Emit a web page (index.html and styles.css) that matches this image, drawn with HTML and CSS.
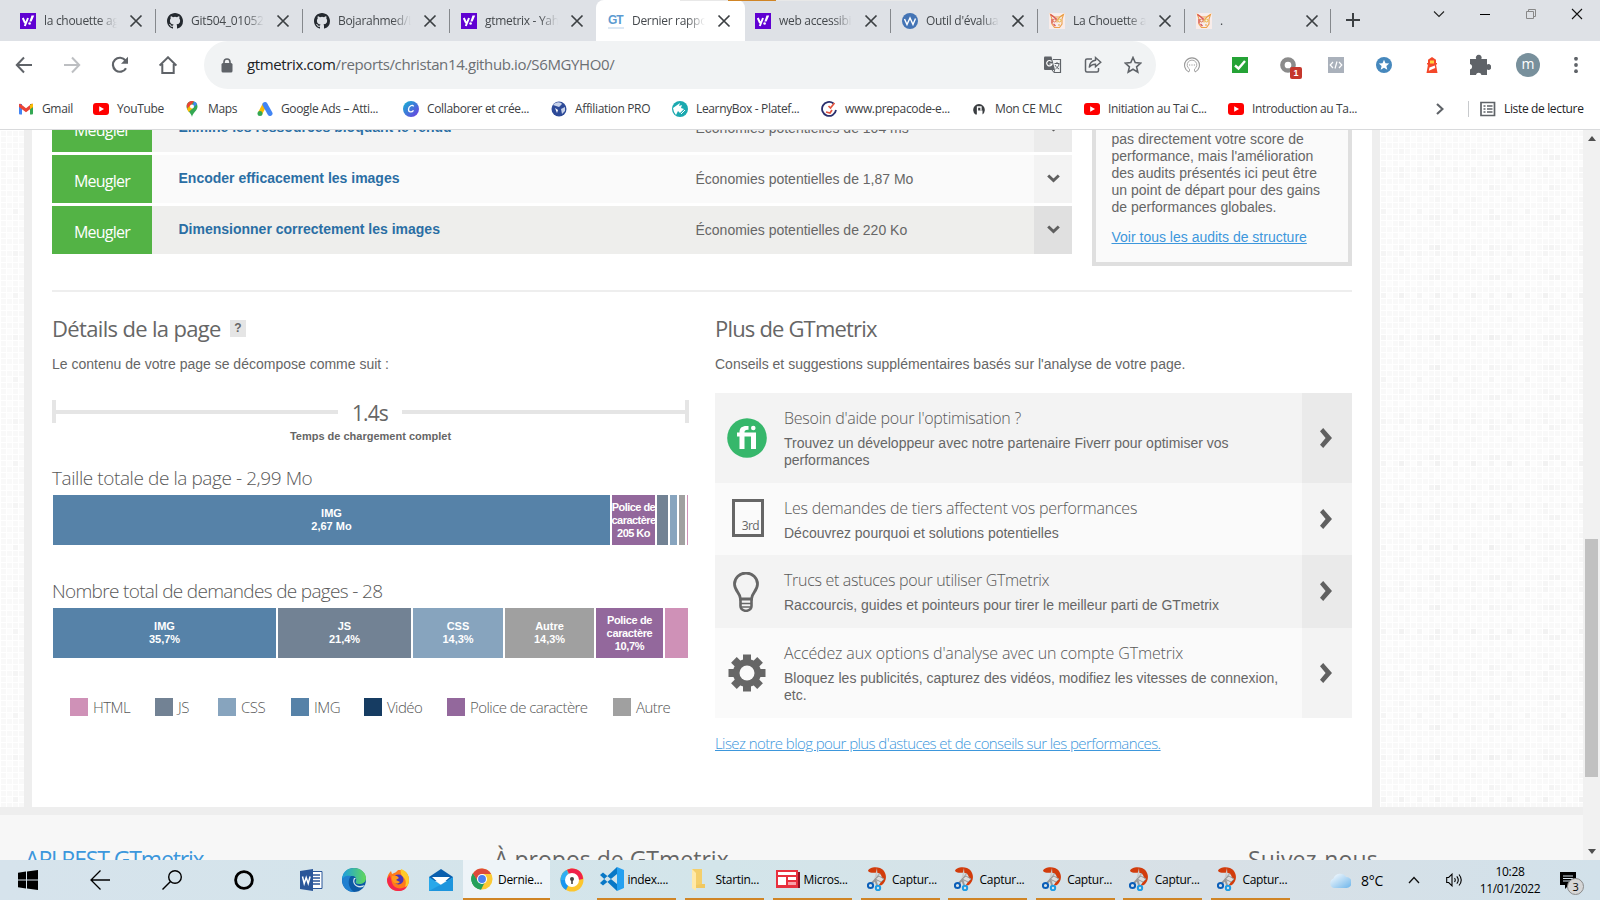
FILE: index.html
```html
<!DOCTYPE html>
<html lang="fr">
<head>
<meta charset="utf-8">
<title>Dernier rapport de performances | GTmetrix</title>
<link rel="stylesheet" href="styles.css">
</head>
<body>
<svg class="defs" width="0" height="0">
  <symbol id="close" viewBox="0 0 14 14"><path d="M1.500 1.500l11 11M12.500 1.500l-11 11" stroke="#3c4043" stroke-width="1.700" fill="none"/></symbol>
  <symbol id="yahoo" viewBox="0 0 16 16"><path fill="#6001d2" d="M0 0h16v16H0z"/><path d="M2.800 5l2.300 5M8 5l-3.200 8" stroke="#fff" stroke-width="2" fill="none"/><path d="M11.500 2.500h2.700L11.600 8.600H9.400z" fill="#fff"/><circle cx="9.600" cy="10.500" r="1.300" fill="#fff"/></symbol>
  <symbol id="github" viewBox="0 0 16 16"><path fill="#24292f" d="M8 0C3.580 0 0 3.580 0 8c0 3.540 2.290 6.530 5.470 7.590.4.070.55-.17.55-.38 0-.19-.01-.82-.01-1.490-2.010.37-2.530-.49-2.690-.94-.09-.23-.48-.94-.82-1.130-.28-.15-.68-.52-.01-.53.63-.01 1.080.58 1.230.82.72 1.210 1.870.87 2.330.66.07-.52.28-.87.51-1.070-1.780-.2-3.640-.89-3.640-3.950 0-.87.31-1.590.82-2.150-.08-.2-.36-1.020.08-2.120 0 0 .67-.21 2.200.82a7.600 7.600 0 0 1 4 0c1.530-1.040 2.200-.82 2.200-.82.44 1.100.16 1.920.08 2.120.51.56.82 1.270.82 2.150 0 3.070-1.870 3.750-3.650 3.950.29.25.54.73.54 1.480 0 1.070-.01 1.930-.01 2.200 0 .21.15.46.55.38A8.010 8.010 0 0 0 16 8c0-4.420-3.580-8-8-8z"/></symbol>
  <symbol id="owl" viewBox="0 0 16 16"><path fill="#f8ecea" d="M0 0h16v16H0z"/><path d="M1.500 1.500l4 2.500h5l4-2.500-1.500 4.500v5L10.500 14.500h-5L3 11V6z" fill="none" stroke="#eda04c" stroke-width="1.100"/><path d="M1.500 1.500L8 6.500M3 6v4.500M4.500 11l2 2" fill="none" stroke="#d8505a" stroke-width="1.200"/><path d="M14.500 1.500L8 6.500v3M9 12h2" fill="none" stroke="#e8a03a"/><circle cx="5.500" cy="7.500" r="1.500" fill="none" stroke="#dd6a4a"/><circle cx="10.500" cy="7.500" r="1.500" fill="none" stroke="#e8b53a"/></symbol>
  <symbol id="yt" viewBox="0 0 16 16"><rect y="2" width="16" height="12" rx="3" fill="#f00"/><path d="M6.200 5.300v5.400L11 8z" fill="#fff"/></symbol>
  <symbol id="arrow" viewBox="0 0 12 20"><path d="M0 3.200L3.200 0 12 10l-8.800 10L0 16.800 5.600 10z" fill="#606060"/></symbol>
  <symbol id="down" viewBox="0 0 13 9"><path d="M1.200 1.500l5.300 5 5.300-5" fill="none" stroke="#5f5f5f" stroke-width="3"/></symbol>
  <symbol id="snip" viewBox="0 0 20 24"><path d="M1 4C2 0 9-.5 13 1c7 3 8 12 2 17l-4 1c5-5 5-12 0-13C8 5 4 7 1 4z" fill="#d23c0c"/><path d="M10 1L7 13l4 2z" fill="#ccc"/><path d="M13 6l-6 8M8 12l6 3 3-3-5-3z" stroke="#999" fill="#ddd"/><path d="M5 16l4-4M10 18L8 12" stroke="#9a9a9a" stroke-width="2"/><circle cx="3.500" cy="18.500" r="2.600" fill="none" stroke="#0a5eb8" stroke-width="2"/><circle cx="11" cy="21" r="2.200" fill="none" stroke="#1e9be3" stroke-width="2"/></symbol>
</svg>

<header class="browser">
  <div class="tabs">
    <div class="tab"><svg class="fav"><use href="#yahoo"/></svg><span class="tab-title">la chouette agence</span><svg class="x"><use href="#close"/></svg></div>
    <div class="tab"><svg class="fav"><use href="#github"/></svg><span class="tab-title">Git504_01052021</span><svg class="x"><use href="#close"/></svg></div>
    <div class="tab"><svg class="fav"><use href="#github"/></svg><span class="tab-title">Bojarahmed/LaChouette</span><svg class="x"><use href="#close"/></svg></div>
    <div class="tab flat"><svg class="fav"><use href="#yahoo"/></svg><span class="tab-title">gtmetrix - Yahoo</span><svg class="x"><use href="#close"/></svg></div>
    <div class="tab active"><span class="gt">GT</span><span class="tab-title">Dernier rapport</span><svg class="x"><use href="#close"/></svg></div>
    <div class="tab"><svg class="fav"><use href="#yahoo"/></svg><span class="tab-title">web accessibility</span><svg class="x"><use href="#close"/></svg></div>
    <div class="tab"><svg class="fav" viewBox="0 0 16 16"><circle cx="8" cy="8" r="8" fill="#4474b5"/><path d="M2.500 6l2.500 5.500L8 5l3 6.500 2.500-6" fill="none" stroke="#fff" stroke-width="1.400"/></svg><span class="tab-title">Outil d'évaluation</span><svg class="x"><use href="#close"/></svg></div>
    <div class="tab"><svg class="fav"><use href="#owl"/></svg><span class="tab-title">La Chouette agence</span><svg class="x"><use href="#close"/></svg></div>
    <div class="tab last"><svg class="fav"><use href="#owl"/></svg><span class="tab-title">.</span><svg class="x"><use href="#close"/></svg></div>
    <svg class="plus" viewBox="0 0 14 14"><path d="M7 0v14M0 7h14" stroke="#3c4043" stroke-width="2"/></svg>
    <div class="winctl">
      <svg width="12" height="12" viewBox="0 0 12 12"><path d="M1 3.500l5 5 5-5" fill="none" stroke="#222" stroke-width="1.100"/></svg>
      <svg width="12" height="12" viewBox="0 0 12 12"><path d="M1 6.500h10" stroke="#000"/></svg>
      <svg width="12" height="12" viewBox="0 0 12 12"><path d="M1.500 3.500h7v7h-7zM3.500 3.500v-2h7v7h-2" fill="none" stroke="#888"/></svg>
      <svg width="12" height="12" viewBox="0 0 12 12"><path d="M1 1l10 10M11 1L1 11" stroke="#111" stroke-width="1.100"/></svg>
    </div>
    <div class="peek"></div>
  </div>

  <div class="toolbar">
    <div class="nav">
      <svg viewBox="0 0 18 18"><path d="M17 9H2M9 1.500L1.800 9 9 16.500" fill="none" stroke="#5f6368" stroke-width="2"/></svg>
      <svg viewBox="0 0 18 18"><path d="M1 9h15M9 1.500L16.200 9 9 16.500" fill="none" stroke="#bdbfc2" stroke-width="2"/></svg>
      <svg viewBox="0 0 18 18"><path d="M15 12.200A7 7 0 1 1 14.500 4.500" fill="none" stroke="#5f6368" stroke-width="2.200"/><path d="M17 .8v7h-7z" fill="#5f6368"/></svg>
      <svg viewBox="0 0 18 18"><path d="M.6 9.500L9 1.300l8.400 8.200M3.300 8v9h11.400V8" fill="none" stroke="#5f6368" stroke-width="2"/></svg>
    </div>
    <div class="omnibox">
      <svg class="lock" viewBox="0 0 12 15"><rect x=".5" y="5" width="11" height="9.500" rx="1.500" fill="#5f6368"/><path d="M3 6V4a3 3 0 0 1 6 0v2" fill="none" stroke="#5f6368" stroke-width="1.600"/></svg>
      <span class="url"><b>gtmetrix.com</b>/reports/christan14.github.io/S6MGYHO0/</span>
      <div class="omni-icons">
        <svg width="18" height="18" viewBox="0 0 18 18"><path d="M9 3.500h7.500v13H10" fill="none" stroke="#5f6368" stroke-width="1.200"/><path d="M0 1.500Q0 .5 1 .5h6.500L11 14H1Q0 14 0 13z" fill="#5f6368"/><path d="M7.500 5.500A2.700 2.700 0 1 0 8 8H5.500" fill="none" stroke="#fff" stroke-width="1.200"/><path d="M10.500 7.500h5M13 6v1.500M15 8c-.5 2.500-2 4-3.500 5M11 9c1 2 2.500 3 4 4M8 14l2 2.500.5-2.500" fill="none" stroke="#5f6368"/></svg>
        <svg width="18" height="18" viewBox="0 0 18 18"><path d="M8 3H3Q1.500 3 1.500 4.500v10Q1.500 16 3 16h10q1.500 0 1.500-1.500V12" fill="none" stroke="#5f6368" stroke-width="1.500"/><path d="M11.500 1.500l5.300 4.700-5.300 4.600V8.200c-3 0-5 1-6.300 3.300.3-4 2.500-6.700 6.300-7.200z" fill="none" stroke="#5f6368" stroke-width="1.400"/></svg>
        <svg width="18" height="18" viewBox="0 0 18 18"><path d="M9 1.500l2.200 5.100 5.600.5-4.200 3.700 1.200 5.400L9 13.300l-4.800 2.900 1.200-5.400L1.200 7.100l5.600-.5z" fill="none" stroke="#5f6368" stroke-width="1.600"/></svg>
      </div>
    </div>
    <div class="exts">
      <svg viewBox="0 0 16 16"><path d="M5 15A7.400 7.400 0 1 1 11 15" fill="none" stroke="#999" stroke-width="1.100"/><path d="M5.500 14.500V12a4.800 4.800 0 1 1 5 0v2.500" fill="none" stroke="#aaa"/><path d="M5 8h6" stroke="#999" stroke-dasharray="1.200"/></svg>
      <svg viewBox="0 0 16 16"><path fill="#25a336" d="M0 0h16v16H0z"/><path d="M3 8.500l3.500 3L13 4" fill="none" stroke="#fff" stroke-width="2.400"/></svg>
      <div class="ext-badge"><svg viewBox="0 0 16 16"><circle cx="8" cy="8" r="5.600" fill="none" stroke="#8b8b8b" stroke-width="4.500"/></svg><span>1</span></div>
      <svg viewBox="0 0 16 16"><path fill="#aab1bb" d="M0 0h16v16H0z"/><path d="M5 5L2.200 8 5 11M11 5l2.800 3-2.800 3M9 4.500l-2 7" fill="none" stroke="#fff" stroke-width="1.200"/></svg>
      <svg viewBox="0 0 16 16"><circle cx="8" cy="8" r="8" fill="#4688bd"/><path d="M8 2.800l1.500 3.500 3.700.3-2.800 2.500.9 3.700L8 10.800l-3.300 2 .9-3.700-2.800-2.500 3.700-.3z" fill="#fff"/></svg>
      <svg viewBox="0 0 16 16"><path d="M8 0l4 2.800V6h1v1.500h-1L13.500 16h-11L4 7.500H3V6h1V2.800z" fill="#f4482a"/><path d="M6 3.500h4V6.500H6z" fill="#ffd23e"/><path d="M5.500 10.500L10.800 8.500l.4 2.600-6.400 2.700z" fill="#fff"/></svg>
      <svg class="puzzle" viewBox="0 0 22 22"><path fill="#5f6368" d="M1 5h6.200a2.900 2.900 0 1 1 5.100 0H18v5.600a2.900 2.900 0 1 1 0 5V21h-5.500a2.900 2.900 0 0 0-5.600 0H1v-5.500a2.900 2.900 0 0 0 0-5.600z"/></svg>
      <span class="avatar">m</span>
      <svg viewBox="0 0 16 16"><g fill="#5f6368"><circle cx="8" cy="1.800" r="1.900"/><circle cx="8" cy="8" r="1.900"/><circle cx="8" cy="14.200" r="1.900"/></g></svg>
    </div>
  </div>

  <div class="bookmarks">
    <div class="bm"><svg viewBox="0 0 16 16"><path d="M1 3h3v10.500H2a1 1 0 0 1-1-1z" fill="#4285f4"/><path d="M12 3h3v9.500a1 1 0 0 1-1 1h-2z" fill="#34a853"/><path d="M1 3.500l1-1L8 7.200l6-4.700 1 1V6l-7 5.300L1 6z" fill="#ea4335"/><path d="M12 4l3-1.500V6l-3 2.200z" fill="#fbbc04"/></svg>Gmail</div>
    <div class="bm"><svg><use href="#yt"/></svg>YouTube</div>
    <div class="bm"><svg viewBox="0 0 16 16"><path d="M8 0a5.500 5.500 0 0 0-5.500 5.500C2.500 10 7 11 8 16c1-5 5.500-6 5.500-10.500A5.500 5.500 0 0 0 8 0z" fill="#34a853"/><path d="M3.800 2A5.500 5.500 0 0 1 10 .4L4 8C2.500 6 2.200 4 3.800 2z" fill="#ea4335"/><path d="M10 .4a5.500 5.500 0 0 1 3 2.600L8 8z" fill="#4285f4"/><path d="M3 8l3.500-4L9 7l-4.300 4z" fill="#fbbc04"/><circle cx="8" cy="5.500" r="2" fill="#fff"/></svg>Maps</div>
    <div class="bm"><svg viewBox="0 0 16 16"><path d="M8 3L3 12.500" stroke="#fbbc04" stroke-width="4.500"/><path d="M8 3.500l5 9" stroke="#4285f4" stroke-width="5" stroke-linecap="round"/><circle cx="3" cy="12.500" r="2.500" fill="#34a853"/></svg>Google Ads – Atti...</div>
    <div class="bm"><svg viewBox="0 0 16 16"><defs><linearGradient id="cv" x2="1" y2="1"><stop stop-color="#12b6d2"/><stop offset="1" stop-color="#7038e0"/></linearGradient></defs><circle cx="8" cy="8" r="8" fill="url(#cv)"/><path d="M10.500 5.500c-.5-2.500-5-.5-5 3 0 3 3.500 3 5 .8" fill="none" stroke="#fff" stroke-width="1.300"/></svg>Collaborer et crée...</div>
    <div class="bm"><svg viewBox="0 0 16 16"><circle cx="8" cy="8" r="7.500" fill="#2d4a98"/><path d="M2 4c3-4 8-3 9-1L8 6 5 5zM10 8l4-2v4l-3 3z" fill="#c7d2ea"/><path d="M4 7l2 5 1-3z" fill="#fff"/></svg>Affiliation PRO</div>
    <div class="bm"><svg viewBox="0 0 16 16"><circle cx="8" cy="8" r="8" fill="#1ba9b0"/><path d="M1 7l7-5-1 3 3-1-1 3 3 1-4 4-2-2-2 4-2-3z" fill="#fff"/><path d="M9 13l4-4" stroke="#fff"/></svg>LearnyBox - Platef...</div>
    <div class="bm"><svg viewBox="0 0 16 16"><path d="M12.500 2.500A7 7 0 1 0 15 9" fill="none" stroke="#2b2f6d" stroke-width="1.800"/><path d="M7.500 5l2 2 4-5M5 11l4 1 2-3" fill="none" stroke="#e2533d" stroke-width="1.700"/></svg>www.prepacode-e...</div>
    <div class="bm"><svg viewBox="0 0 16 16"><path d="M4.500 13.500A5.800 5.800 0 1 1 11.500 13.500V9.500H6V13.500z" fill="#3a3d40"/><path d="M6.500 14V6H10v3.500" stroke="#fff" stroke-width="1.300" fill="none"/></svg>Mon CE MLC</div>
    <div class="bm"><svg><use href="#yt"/></svg>Initiation au Tai C...</div>
    <div class="bm"><svg><use href="#yt"/></svg>Introduction au Ta...</div>
    <svg class="more" viewBox="0 0 8 12"><path d="M1 1l5.500 5L1 11" fill="none" stroke="#5f6368" stroke-width="2.200"/></svg>
    <div class="bm reading"><svg viewBox="0 0 16 16"><path d="M1 1.500h13.500v13H1z" fill="none" stroke="#5f6368" stroke-width="1.700"/><path d="M3.500 5h2M3.500 8h2M3.500 11h2M7 5h5.500M7 8h5.500M7 11h5.500" stroke="#5f6368" stroke-width="1.500"/></svg>Liste de lecture</div>
  </div>
</header>

<div class="viewport">
  <main class="page">
    <div class="panel">
      <div class="top">
        <div class="audits">
          <div class="audit odd"><span class="grade">Meugler</span><a>Élimine les ressources bloquant le rendu</a><span class="saving">Économies potentielles de 104 ms</span><i><svg><use href="#down"/></svg></i></div>
          <div class="audit"><span class="grade">Meugler</span><a>Encoder efficacement les images</a><span class="saving">Économies potentielles de 1,87 Mo</span><i><svg><use href="#down"/></svg></i></div>
          <div class="audit hover"><span class="grade">Meugler</span><a>Dimensionner correctement les images</a><span class="saving">Économies potentielles de 220 Ko</span><i><svg><use href="#down"/></svg></i></div>
        </div>
        <aside class="note">
          <p>pas directement votre score de<br>performance, mais l'amélioration<br>des audits présentés ici peut être<br>un point de départ pour des gains<br>de performances globales.</p>
          <a>Voir tous les audits de structure</a>
        </aside>
      </div>
      <div class="columns">
        <section>
          <h2 class="details">Détails de la page <span class="help">?</span></h2>
          <p class="intro">Le contenu de votre page se décompose comme suit :</p>
          <div class="scale"><span class="line left"></span><b>1.4s</b><span class="line right"></span></div>
          <div class="scale-label">Temps de chargement complet</div>
          <h3 class="size">Taille totale de la page - 2,99 Mo</h3>
          <div class="bar sizes">
            <div class="img">IMG<br>2,67 Mo</div><div class="font">Police de<br>caractère<br>205 Ko</div><div class="js"></div><div class="css"></div><div class="other"></div><div class="html"></div>
          </div>
          <h3 class="count">Nombre total de demandes de pages - 28</h3>
          <div class="bar requests">
            <div class="img">IMG<br>35,7%</div><div class="js">JS<br>21,4%</div><div class="css">CSS<br>14,3%</div><div class="other">Autre<br>14,3%</div><div class="font">Police de<br>caractère<br>10,7%</div><div class="html"></div>
          </div>
          <div class="legend">
            <span><i class="html"></i>HTML</span><span><i class="js"></i>JS</span><span><i class="css"></i>CSS</span><span><i class="img"></i>IMG</span><span><i class="video"></i>Vidéo</span><span><i class="font"></i>Police de caractère</span><span><i class="other"></i>Autre</span>
          </div>
        </section>
        <section>
          <h2>Plus de GTmetrix</h2>
          <p class="intro">Conseils et suggestions supplémentaires basés sur l'analyse de votre page.</p>
          <div class="tips">
            <div class="tip odd tall">
              <svg class="pic" viewBox="0 0 40 40"><circle cx="20" cy="20" r="19.800" fill="#36b76b"/><path d="M12.500 31V18.500h-2.500v-4h2.500c0-5 2.500-7 9-6.500v3.800c-3-.2-4 .5-4 2.700H29V31h-5V18.500h-6.500V31z" fill="#fff"/><circle cx="26.300" cy="10" r="2.300" fill="#fff"/></svg>
              <div class="copy"><h4 class="t1">Besoin d'aide pour l'optimisation ?</h4><p>Trouvez un développeur avec notre partenaire Fiverr pour optimiser vos<br>performances</p></div><i><svg><use href="#arrow"/></svg></i>
            </div>
            <div class="tip">
              <div class="third"><span>3rd</span></div>
              <div class="copy"><h4 class="t2">Les demandes de tiers affectent vos performances</h4><p>Découvrez pourquoi et solutions potentielles</p></div><i><svg><use href="#arrow"/></svg></i>
            </div>
            <div class="tip odd bulb">
              <svg class="pic" viewBox="0 0 40 40"><path d="M13.500 27c0-6-6-8-6-15a11.500 11 0 0 1 23 0c0 7-6 9-6 15z" fill="none" stroke="#666" stroke-width="2.800"/><path d="M13.500 26v8q0 4 5.500 5 5.500-1 5.500-5v-8" fill="none" stroke="#666" stroke-width="2.600"/><path d="M13 31.500h12M14.500 35h9" stroke="#666" stroke-width="1.600"/></svg>
              <div class="copy"><h4 class="t3">Trucs et astuces pour utiliser GTmetrix</h4><p>Raccourcis, guides et pointeurs pour tirer le meilleur parti de GTmetrix</p></div><i><svg><use href="#arrow"/></svg></i>
            </div>
            <div class="tip tall">
              <svg class="pic" viewBox="0 0 40 40"><g fill="#666"><path d="M16 1.500h8v37h-8zM1.500 16h37v8h-37z"/><path d="M16 1.500h8v37h-8zM1.500 16h37v8h-37z" transform="rotate(45 20 20)"/><circle cx="20" cy="20" r="14"/></g><circle cx="20" cy="20" r="7.500" fill="#fafafa"/></svg>
              <div class="copy"><h4 class="t4">Accédez aux options d'analyse avec un compte GTmetrix</h4><p>Bloquez les publicités, capturez des vidéos, modifiez les vitesses de connexion,<br>etc.</p></div><i><svg><use href="#arrow"/></svg></i>
            </div>
          </div>
          <a class="blog">Lisez notre blog pour plus d'astuces et de conseils sur les performances.</a>
        </section>
      </div>
    </div>
    <footer class="foot"><a>API REST GTmetrix</a><span class="about">À propos de GTmetrix</span><span class="follow">Suivez-nous</span></footer>
  </main>
  <div class="scrollbar"><svg width="8" height="5"><path d="M0 5l4-5 4 5z" fill="#505050"/></svg><div class="thumb"></div><svg width="8" height="5"><path d="M0 0l4 5 4-5z" fill="#505050"/></svg></div>
</div>

<div class="taskbar">
  <div class="sys"><svg width="20" height="20" viewBox="0 0 20 20"><path d="M0 2.800l8-1.200v7.900H0zM9 1.400L20 0v9.500H9zM0 10.500h8v7.900l-8-1.200zM9 10.500h11V20L9 18.600z"/></svg></div>
  <div class="sys"><svg width="20" height="20" viewBox="0 0 20 20"><path d="M20 10H1M10.500 .5L1 10l9.500 9.500" fill="none" stroke="#000" stroke-width="1.300"/></svg></div>
  <div class="sys"><svg width="20" height="20" viewBox="0 0 20 20"><circle cx="13" cy="7" r="6.300" fill="none" stroke="#000" stroke-width="1.400"/><path d="M8.500 11.500L.5 19.500" stroke="#000" stroke-width="1.400"/></svg></div>
  <div class="sys"><svg width="20" height="20" viewBox="0 0 20 20"><circle cx="10" cy="10" r="8.400" fill="none" stroke="#000" stroke-width="2.800"/></svg></div>
  <div class="pin first"><svg viewBox="0 0 24 24"><path d="M11 3.500h12v17H11z" fill="#fff" stroke="#2a5699"/><path d="M14 7h7M14 10h7M14 13h7M14 16h7" stroke="#2a5699" stroke-width="1.300"/><path d="M1 3l13-2v22L1 21z" fill="#2a5699"/><path d="M3.500 8.500l1.700 7 2-6 2 6 1.900-7" fill="none" stroke="#fff" stroke-width="1.500"/></svg></div>
  <div class="pin"><svg viewBox="0 0 24 24"><defs><linearGradient id="eg" x2="1"><stop stop-color="#1b9de2"/><stop offset="1" stop-color="#62d85a"/></linearGradient></defs><circle cx="12" cy="12" r="12" fill="#0c59a4"/><path d="M0 11C1 3 6 0 12 0c7 0 12 5 12 10 0 4-3 6-7 6-3 0-4-1-3-3 1-3-1-5-4-5-5 0-8 2-10 3z" fill="url(#eg)"/><path d="M0 12c1-4 6-5 9-4-3 3-4 11 3 16C5 24 0 19 0 12z" fill="#2080d0"/><path d="M14 10c-3 2-2 8 4 8 2 0 4-1 5-1l-2 2c-7 2-12-4-9-9z" fill="#d4e3ec"/></svg></div>
  <div class="pin"><svg viewBox="0 0 24 24"><path d="M12 2c8-1 11 5 11 10a11 11 0 0 1-22 0c0-4 2-7 4-9l1 3c2-1 5-2 6-4z" fill="#ff7a1a"/><path d="M15 1c6 2 8 7 8 11s-2 8-5 9c3-5 2-10-1-12-2-2-3-5-2-8z" fill="#ffca28"/><path d="M1 11c0 7 5 12 11 12 5 0 8-2 9-5-6 4-13 3-15-3L4 7z" fill="#f4264f"/><circle cx="12.500" cy="11.500" r="5" fill="#4b35b5"/><path d="M6 8l5 0 2 2-3 2 4 2c-4 4-9 0-8-6z" fill="#ff9a1a"/></svg></div>
  <div class="pin"><svg viewBox="0 0 24 24"><path d="M0 9l12-8 12 8v4H0z" fill="#0a5fae"/><path d="M3 9h18l-9 8z" fill="#fff"/><path d="M0 9l12 8 12-8v14H0z" fill="#28a8ea"/><path d="M0 23l24-13v13z" fill="#1689d3" opacity=".6"/></svg></div>
  <div class="task on"><svg viewBox="0 0 24 24"><circle cx="12" cy="12" r="11.500" fill="#fbc934"/><path d="M12 12L2 6A11.500 11.500 0 0 1 22 6.500H12z" fill="#dd4a3b"/><path d="M2 6a11.500 11.500 0 0 0 9 17.500L16 14l-9-1z" fill="#26a05a"/><path d="M2 6l5 8 5-2V6.500z" fill="#dd4a3b"/><path d="M2 6l5.500 9L12 16l-1 7.500A11.500 11.500 0 0 1 2 6z" fill="#26a05a"/><circle cx="12" cy="12" r="5.500" fill="#fff"/><circle cx="12" cy="12" r="4.300" fill="#4a80f0"/></svg>Dernie...</div>
  <div class="pin"><svg viewBox="0 0 24 24"><circle cx="12" cy="12" r="11.500" fill="#fcc62e"/><path d="M12 12L7 2c6-4 16 0 16 9l-5 1z" fill="#f0204a"/><path d="M7 2C-2 7-1 18 6 22l3-6z" fill="#1896f0"/><path d="M12 12L.5 12C.5 7 3 3 7 2z" fill="#38b8f5" opacity=".7"/><circle cx="12" cy="12" r="7" fill="#fff"/><circle cx="12" cy="11" r="2" fill="#444"/><path d="M11.200 11h1.600v5h-1.600z" fill="#444"/></svg></div>
  <div class="task"><svg viewBox="0 0 24 24"><path d="M17 0l7 3v18l-7 3z" fill="#24a0f0"/><path d="M17 0v7L3 18.500 0 16zM17 24v-7L3 5.500 0 8z" fill="#0878c6"/></svg>index....</div>
  <div class="task folder"><svg viewBox="0 0 24 24"><path d="M4 2h10v18H4z" fill="#f4cf6b"/><path d="M4 2l4 4v18l-4-3z" fill="#ffe9a8"/><path d="M14 17h3v4H8v-3z" fill="#f0c860"/></svg>Startin...</div>
  <div class="task"><svg viewBox="0 0 24 24"><path d="M2 5h22v16H2z" fill="#8b1022"/><path d="M0 3h22v18H0z" fill="#e8303e"/><path d="M2 5h18v3H2zM2 10h8v8H2zM12 10h8v3h-8z" fill="#fff"/><path d="M12 15h8v3h-8z" fill="#f8a0a8"/></svg>Micros...</div>
  <div class="task cap"><svg><use href="#snip"/></svg>Captur...</div>
  <div class="task cap"><svg><use href="#snip"/></svg>Captur...</div>
  <div class="task cap"><svg><use href="#snip"/></svg>Captur...</div>
  <div class="task cap"><svg><use href="#snip"/></svg>Captur...</div>
  <div class="task cap"><svg><use href="#snip"/></svg>Captur...</div>
  <div class="tray">
    <svg class="cloud" viewBox="0 0 22 16"><defs><linearGradient id="cl" x2="1" y2="1"><stop stop-color="#fff"/><stop offset="1" stop-color="#6bb4ea"/></linearGradient></defs><path d="M5 16a5 5 0 0 1-.5-9.500A7 7 0 0 1 17 5a5.500 5.500 0 0 1 .5 11z" fill="url(#cl)"/></svg><span class="temp">8°C</span>
    <svg class="up" viewBox="0 0 12 8"><path d="M1 7l5-5.500L11 7" fill="none" stroke="#111" stroke-width="1.300"/></svg>
    <svg class="vol" viewBox="0 0 17 14"><path d="M.7 4.500h2L6 1.200v11.600L2.700 9.500h-2z" fill="none" stroke="#000" stroke-width="1.100"/><path d="M8.500 5q1.500 2 0 4M10.800 3.300q3 3.700 0 7.400M13 1.500q4.500 5.500 0 11" fill="none" stroke="#000" stroke-width="1.100"/></svg>
    <div class="clock">10:28<br>11/01/2022</div>
    <div class="notif"><svg width="16" height="17" viewBox="0 0 16 17"><path d="M0 0h16v13h-7l-4 4v-4H0z"/><path d="M3 4h10M3 6.500h10M3 9h7" stroke="#d5e3ec"/></svg><span>3</span></div>
  </div>
</div>
</body>
</html>
```
FILE: styles.css
```css
* { box-sizing: border-box; }
body { margin: 0; width: 1600px; height: 900px; overflow: hidden; display: flex; flex-direction: column; background: #fff; font-family: "Open Sans", "Noto Sans", sans-serif; }
svg { display: block; flex: none; }
.defs { position: absolute; }
h2, h3, h4, p { margin: 0; font-weight: 400; }

/* browser chrome */
.browser { height: 130px; border-bottom: 1px solid #d9dadc; flex: none; }
.tabs { position: relative; height: 41px; background: #dee1e6; display: flex; padding-left: 9px; }
.tab { width: 147px; height: 41px; display: flex; align-items: center; padding-left: 11px; background: linear-gradient(#85888c, #85888c) no-repeat 146px 9px / 1px 24px; }
.tab.flat { background: none; }
.tab.active { margin: 0 -1px; width: 149px; padding-left: 12px; background: #fff; border-radius: 8px 8px 0 0; }
.tab.last { width: 146px; background-position: 145px 9px; }
.last .tab-title { margin-right: 12px; }
.fav { width: 16px; height: 16px; }
.gt { width: 16px; font: bold 12px "Liberation Sans", sans-serif; letter-spacing: -1px; color: #5c9bd1; border-bottom: 2px solid #dce8f4; }
.tab-title { width: 73px; margin: 0 12px 0 8px; overflow: hidden; white-space: nowrap; font-size: 12px; letter-spacing: -.3px; color: #45494d; -webkit-mask-image: linear-gradient(90deg, #000 75%, transparent); mask-image: linear-gradient(90deg, #000 75%, transparent); }
.x { width: 14px; height: 14px; }
.plus { width: 14px; height: 14px; margin: 13px 0 0 15px; }
.winctl { margin-left: auto; display: flex; gap: 34px; padding: 8px 17px 0 0; }
.peek { position: absolute; left: 680px; top: 0; width: 240px; height: 1px; background: linear-gradient(90deg, #e8e8e8 48px, #d08526 48px 96px, #e8e8e8 96px); }

.toolbar { height: 48px; display: flex; align-items: center; padding-left: 15px; }
.nav { display: flex; gap: 30px; }
.nav svg { width: 18px; height: 18px; }
.omnibox { margin-left: 27px; width: 952px; height: 48px; border-radius: 24px; background: #f1f3f4; display: flex; align-items: center; padding-left: 17px; }
.lock { width: 12px; height: 15px; }
.url { margin: 0 0 2px 14px; font-size: 15px; letter-spacing: -.37px; color: #6b6f73; }
.url b { font-weight: 400; color: #202124; }
.omni-icons { margin-left: auto; display: flex; gap: 22px; padding-right: 14px; }
.exts { margin-left: 28px; display: flex; gap: 32px; align-items: center; }
.exts svg { width: 16px; height: 16px; }
.exts .puzzle { width: 22px; height: 22px; margin: 0 -3px; }
.ext-badge { position: relative; }
.ext-badge span { position: absolute; left: 10px; top: 10px; width: 12px; height: 12px; border-radius: 2px; background: #c5372c; color: #fff; font: bold 9px/12px "Liberation Sans", sans-serif; text-align: center; }
.avatar { width: 24px; height: 24px; margin: 0 -4px; border-radius: 50%; background: #78909c; color: #fff; font-size: 14px; line-height: 22px; text-align: center; }

.bookmarks { height: 40px; padding: 0 0 1px 18px; display: grid; grid-template-columns: 75px 91px 73px 146px 148px 121px 149px 150px 113px 144px 208px 32px 132px; align-items: center; }
.bm { display: flex; align-items: center; gap: 8px; font-size: 12px; letter-spacing: -.35px; white-space: nowrap; color: #3c4043; }
.bm svg { width: 16px; height: 16px; }
.more { width: 8px; height: 12px; }
.reading { height: 16px; border-left: 1px solid #c8cacd; padding-left: 11px; color: #202124; }

/* report page */
.viewport { height: 730px; flex: none; display: flex; overflow: hidden; }
.page {
  width: 1583px;
  background-color: #fcfcfc;
  background-image:
    linear-gradient(#fff 1px, transparent 1px),
    linear-gradient(90deg, #fff 1px, transparent 1px),
    conic-gradient(from 90deg at 30px 18px, rgba(0, 0, 0, .025) 25%, transparent 0),
    conic-gradient(from 90deg at 48px 24px, rgba(0, 0, 0, .02) 25%, transparent 0),
    conic-gradient(from 90deg at 12px 36px, rgba(0, 0, 0, .015) 25%, transparent 0),
    conic-gradient(from 90deg at 6px 6px, transparent 25%, rgba(0, 0, 0, .012) 0);
  background-size: 6px 6px, 6px 6px, 36px 24px, 60px 30px, 18px 42px, 12px 12px;
}
.panel { margin-left: 24px; width: 1356px; height: 677px; border: solid #eee; border-width: 0 8px; background: #fff; padding: 0 20px; overflow: hidden; color: #666; font-family: "Liberation Sans", Arial, sans-serif; font-size: 14px; }
.top { height: 162px; display: flex; gap: 20px; border-bottom: 2px solid #eee; }
.audits { width: 1020px; margin-top: -26px; display: flex; flex-direction: column; gap: 3px; }
.audit { height: 48px; display: flex; align-items: center; background: #fafafa; }
.audit.odd { background: #f3f3f3; }
.audit.hover { background: #eeeeec; }
.grade { width: 100px; height: 48px; line-height: 53px; margin-right: 26.500px; background: #53b345; color: #fff; text-align: center; font-family: "Open Sans", sans-serif; font-size: 16px; letter-spacing: -.75px; }
.audit a { width: 517px; font-weight: 700; color: #2a6ea4; padding-bottom: 2px; }
.audit i { margin-left: auto; width: 38px; height: 48px; background: #f3f3f3; display: grid; place-items: center; }
.audit.odd i { background: #ebebeb; }
.audit.hover i { background: #e0e0e0; }
.audit i svg { width: 13px; height: 9px; margin-bottom: 2px; }
.note { width: 260px; height: 136px; border: solid #dfdfdf; border-width: 0 4px 4px; background: #fafafa; padding: 1px 0 0 15.500px; line-height: 17px; white-space: nowrap; }
.note p { margin-bottom: 13px; }
.note a, .blog { color: #3d97dc; text-decoration: underline; }

.columns { display: flex; gap: 26px; }
.columns section { width: 637px; }
h2 { margin-top: 21px; height: 30px; line-height: 30px; display: flex; align-items: center; font-family: "Open Sans", sans-serif; font-size: 22px; letter-spacing: -.82px; }
.details { letter-spacing: -.66px; }
.help { margin: 0 0 0 9px; width: 16px; height: 17px; background: #e5e5e5; font: bold 12px/17px "Liberation Sans", sans-serif; letter-spacing: 0; text-align: center; }
.intro { margin-top: 11px; height: 20px; line-height: 20px; }
.scale { margin-top: 26px; height: 23px; display: flex; justify-content: space-between; align-items: center; }
.line { width: 286px; height: 23px; background: linear-gradient(#e5e5e5, #e5e5e5) no-repeat 0 10px / 100% 4px; }
.left { border-left: 4px solid #e5e5e5; }
.right { width: 287px; border-right: 4px solid #e5e5e5; }
.scale b { font: 400 21px/30px "Open Sans", sans-serif; letter-spacing: -.9px; padding-top: 3px; }
.scale-label { margin-top: 6px; height: 14px; font-size: 11px; font-weight: 700; line-height: 14px; text-align: center; }
h3 { height: 24px; line-height: 24px; font-family: "Open Sans", sans-serif; font-weight: 300; font-size: 19px; letter-spacing: -.67px; color: #585858; }
.size { margin-top: 23px; letter-spacing: -.42px; }
.count { margin-top: 34px; }
.bar { margin: 5px 1px 0; height: 50px; display: grid; column-gap: 2px; }
.sizes { grid-template-columns: 557px 43px 11px 7px 6px 1px; }
.requests { grid-template-columns: 223px 133px 90px 89px 67px 23px; }
.bar div { display: flex; align-items: center; justify-content: center; overflow: hidden; white-space: nowrap; text-align: center; font-size: 11px; font-weight: 700; line-height: 13px; color: #fff; }
.bar .font { letter-spacing: -.35px; }
.sizes .font { letter-spacing: -.55px; }
.img { background: #5682a8; }
.font { background: #93689c; }
.js { background: #728294; }
.css { background: #87a4be; }
.other { background: #a0a0a0; }
.html { background: #cf91b7; }
.video { background: #163c62; }
.legend { margin: 39px 18px 0; height: 18px; display: grid; grid-template-columns: 85px 63px 73px 73px 83px 166px 60px; }
.legend span { display: flex; align-items: center; white-space: nowrap; font-family: "Open Sans", sans-serif; font-weight: 300; font-size: 15px; letter-spacing: -.55px; color: #585858; }
.legend i { width: 18px; height: 18px; margin-right: 5px; flex: none; }

.tips { margin-top: 19px; }
.tip { height: 72px; display: flex; background: #fafafa; align-items: center; }
.tip.odd { background: #f3f3f3; }
.tip.bulb { height: 73px; }
.tip.tall { height: 90px; }
.pic { width: 40px; height: 40px; margin: 0 17px 0 12px; }
.third { width: 32px; height: 38px; margin: 0 20px 3px 17px; border: 3px solid #666; display: flex; align-items: flex-end; justify-content: flex-end; font: 400 12px/16px "Open Sans", sans-serif; padding: 0 2px 0 0; letter-spacing: -.6px; }
.copy { align-self: flex-start; padding-top: 13px; white-space: nowrap; }
h4 { height: 24px; line-height: 24px; font-family: "Open Sans", sans-serif; font-weight: 300; font-size: 16px; color: #585858; }
.t1 { letter-spacing: -.25px; }
.t2 { letter-spacing: -.22px; }
.t3 { letter-spacing: -.31px; }
.t4 { letter-spacing: -.14px; }
.copy p { line-height: 17px; margin-top: 5px; }
.tip i { margin-left: auto; width: 50px; height: 100%; background: #f3f3f3; display: grid; place-items: center; }
.tip.odd i { background: #eaeaea; }
.tip i svg { width: 12px; height: 20px; margin: 0 2px 1px 0; }
.blog { display: block; margin-top: 15px; height: 20px; font: 300 15px/20px "Open Sans", sans-serif; letter-spacing: -.58px; white-space: nowrap; }

.foot { height: 60px; border-top: 8px solid #eee; background: #f7f7f7; padding: 29px 25px 0; display: grid; grid-template-columns: 469px 754px 1fr; font-size: 23px; line-height: 30px; color: #666; }
.foot a { color: #3d97dc; letter-spacing: -1.150px; }
.about { letter-spacing: 0; }
.follow { letter-spacing: .15px; }

.scrollbar { width: 17px; background: #f1f1f1; display: flex; flex-direction: column; align-items: center; padding: 6px 0; }
.thumb { width: 13px; height: 238px; margin: 398px 0 auto; background: #c1c1c1; }

/* taskbar */
.taskbar { height: 40px; flex: none; display: flex; background: linear-gradient(90deg, #d6e3ec, #d3e5ea 45%, #d8e0e6 75%, #d2e1ea); color: #000; font-size: 12px; letter-spacing: -.3px; }
.sys { width: 72px; display: grid; place-items: center; }
.sys:first-child { margin-left: -8px; }
.pin { width: 43.500px; display: grid; place-items: center; }
.pin.first { margin-left: 9px; }
.pin svg { width: 24px; height: 24px; }
.task { width: 79px; margin-right: 9px; padding-left: 3px; display: flex; align-items: center; gap: 4px; border-bottom: 2px solid #d08526; white-space: nowrap; }
.task svg { width: 24px; height: 24px; }
.task.on { width: 87px; margin-right: 0; padding-left: 8px; background: #eef4f8; gap: 5px; }
.task.on svg { width: 22px; height: 22px; }
.task.on + .pin { margin-right: 3px; }
.task.cap { width: 79px; margin-right: 8.600px; padding-left: 6px; gap: 5.500px; }
.cap svg { width: 20px; }
.tray { margin-left: auto; display: flex; align-items: center; padding-right: 16px; }
.cloud { width: 22px; height: 16px; }
.temp { width: 43px; margin-left: 10px; font-size: 14px; }
.up { width: 12px; height: 8px; margin: 0 26px 0 4px; }
.vol { width: 17px; height: 14px; }
.clock { width: 70px; margin: 0 15px 0 12px; line-height: 17.500px; text-align: center; }
.notif { position: relative; width: 24px; height: 17px; }
.notif span { position: absolute; left: 7px; top: 6px; width: 17px; height: 17px; border: 1px solid #8a8a8a; border-radius: 50%; background: #d6d6d6; font-size: 11px; line-height: 15px; text-align: center; }
```
